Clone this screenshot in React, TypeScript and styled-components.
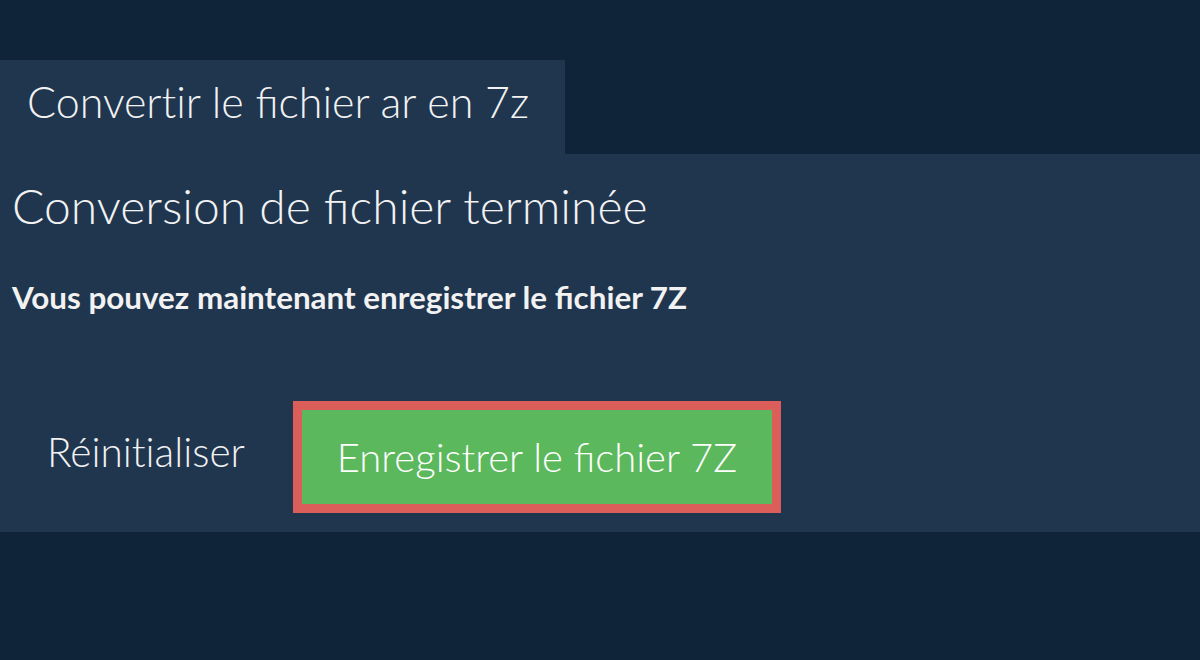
import { FC } from 'react';
import styled, { createGlobalStyle } from 'styled-components';

const GlobalStyle = createGlobalStyle`
  html, body {
    margin: 0;
    padding: 0;
    background-color: #0f2439;
    font-family: Lato, "Open Sans", sans-serif;
    color: #f2f2f2;
  }
`

// \u200C keeps Lato from joining "ti" into a ligature, as in the reference
const App: FC = () => {
  return (
    <PageSC>
      <GlobalStyle />
      <TabSC>{'Convert\u200Cir le fichier ar en 7z'}</TabSC>
      <PanelSC>
        <TitleSC>Conversion de fichier terminée</TitleSC>
        <NoteSC>Vous pouvez maintenant enregistrer le fichier 7Z</NoteSC>
        <ActionsSC>
          <ResetButtonSC>{'Réinit\u200Cialiser'}</ResetButtonSC>
          <SaveButtonSC>Enregistrer le fichier 7Z</SaveButtonSC>
        </ActionsSC>
      </PanelSC>
    </PageSC>
  );
};

export default App;

const PageSC = styled('div')`
  padding-top: 60px;
`
const TabSC = styled('div')`
  display: inline-block;
  box-sizing: border-box;
  height: 94px;
  padding: 0 36px 0 27px;
  background-color: #20364f;
  font-size: 43px;
  font-weight: 300;
  line-height: 84px;
`
const PanelSC = styled('div')`
  background-color: #20364f;
  padding: 20px 12px 19px;
`
const TitleSC = styled('h1')`
  margin: 0;
  font-size: 48px;
  font-weight: 300;
  line-height: 64px;
`
const NoteSC = styled('p')`
  margin: 39px 0 0;
  font-size: 31.4px;
  font-weight: 700;
  line-height: 40px;
`
const ActionsSC = styled('div')`
  display: flex;
  align-items: center;
  margin-top: 84px;
`
const ResetButtonSC = styled('button')`
  background: none;
  border: none;
  padding: 0 48px 0 35px;
  font-family: inherit;
  font-size: 40.5px;
  font-weight: 300;
  color: #f2f2f2;
  cursor: pointer;
  margin-top: -12px;
`
const SaveButtonSC = styled('button')`
  box-sizing: border-box;
  height: 112px;
  padding: 0 35px;
  background-color: #5cb85c;
  border: 9px solid #dc5e5a;
  font-family: inherit;
  font-size: 40px;
  font-weight: 300;
  color: #ffffff;
  cursor: pointer;
`
